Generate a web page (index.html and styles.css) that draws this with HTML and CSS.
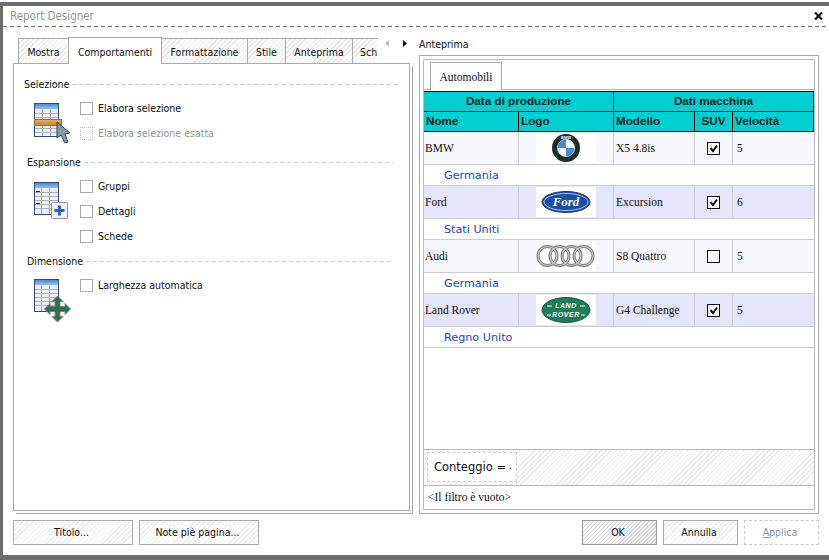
FILE: index.html
```html
<!DOCTYPE html>
<html lang="it">
<head>
<meta charset="utf-8">
<title>Report Designer</title>
<link rel="stylesheet" href="styles.css">
</head>
<body>
<div class="window">
  <header class="titlebar">
    <span class="title">Report Designer</span>
    <svg class="close" width="9" height="8" viewBox="0 0 9 8"><path d="M1 0.5 L8 7.5 M8 0.5 L1 7.5" stroke="#111" stroke-width="2.2"/></svg>
  </header>
  <div class="dashline"></div>
  <div class="content">
    <section class="left">
      <div class="tabbar">
        <div class="tabs">
          <div class="tab t1">Mostra</div>
          <div class="tab active">Comportamenti</div>
          <div class="tab t3">Formattazione</div>
          <div class="tab t4">Stile</div>
          <div class="tab t5">Anteprima</div>
          <div class="tab cut">Sch</div>
        </div>
        <div class="arrows">
          <svg width="5" height="7" viewBox="0 0 5 7"><path d="M4 0 L0 3.5 L4 7Z" fill="#bbb"/></svg>
          <svg width="5" height="7" viewBox="0 0 5 7"><path d="M1 0 L5 3.5 L1 7Z" fill="#111"/></svg>
        </div>
      </div>
      <div class="panel">
        <div class="heading"><span>Selezione</span></div>
        <div class="group g-sel">
          <svg class="gicon" width="40" height="44" viewBox="0 0 40 44">
            <defs>
              <linearGradient id="hd" x1="0" y1="0" x2="0" y2="1"><stop offset="0" stop-color="#4f86d8"/><stop offset="1" stop-color="#9cc0ee"/></linearGradient>
              <linearGradient id="or" x1="0" y1="0" x2="0" y2="1"><stop offset="0" stop-color="#eeb063"/><stop offset="1" stop-color="#cf7f2a"/></linearGradient>
            </defs>
            <rect x="2.500" y="1.500" width="24" height="33" fill="#eef1f3" stroke="#2f4a86"/>
            <rect x="3" y="2" width="23" height="5" fill="url(#hd)"/>
            <path d="M3 11.500H26M3 15.500H26M3 26.500H26M3 30.500H26M10.500 7V34M18.500 7V34" stroke="#a9b0b8" fill="none"/>
            <rect x="2.500" y="17.500" width="27" height="6" fill="url(#or)" stroke="#a86a20"/>
            <path d="M25 20 V36 L29 33 L33 41 L36 40 L33 32 L38 31Z" fill="#8c979c" stroke="#2e3f60"/>
          </svg>
          <div class="checks">
            <label class="check"><span class="box"></span>Elabora selezione</label>
            <label class="check off"><span class="box"></span>Elabora selezione esatta</label>
          </div>
        </div>
        <div class="heading inset"><span>Espansione</span></div>
        <div class="group g-esp">
          <svg class="gicon" width="40" height="44" viewBox="0 0 40 44">
            <rect x="2.500" y="1.500" width="24" height="32" fill="#eef1f3" stroke="#2f4a86"/>
            <rect x="3" y="2" width="23" height="5" fill="url(#hd)"/>
            <path d="M3 11.500H26M3 15.500H26M3 19.500H26M3 23.500H26M3 27.500H26M9.500 7V33M17.500 7V33" stroke="#a9b0b8" fill="none"/>
            <path d="M4 10.500H8M4 22.500H8" stroke="#223" fill="none"/>
            <rect x="19.500" y="21.500" width="16" height="16" rx="1" fill="#f2f4f8" stroke="#8e96a0"/>
            <path d="M27.500 24.500V34.500M22.500 29.500H32.500" stroke="#2a62c4" stroke-width="3" fill="none"/>
          </svg>
          <div class="checks">
            <label class="check"><span class="box"></span>Gruppi</label>
            <label class="check"><span class="box"></span>Dettagli</label>
            <label class="check"><span class="box"></span>Schede</label>
          </div>
        </div>
        <div class="heading inset"><span>Dimensione</span></div>
        <div class="group g-dim">
          <svg class="gicon" width="40" height="44" viewBox="0 0 40 44">
            <rect x="2.500" y="0.500" width="24" height="32" fill="#eef1f3" stroke="#2f4a86"/>
            <rect x="3" y="1" width="23" height="5" fill="url(#hd)"/>
            <path d="M3 10.500H26M3 14.500H26M3 18.500H26M3 22.500H26M3 26.500H26M9.500 6V32M17.500 6V32" stroke="#a9b0b8" fill="none"/>
            <path d="M25.500 17 L31 22.500 H28 V27.500 H33 V24.500 L38.500 30 L33 35.500 V32.500 H28 V37.500 H31 L25.500 43 L20 37.500 H23 V32.500 H18 V35.500 L12.500 30 L18 24.500 V27.500 H23 V22.500 H20Z" fill="#2f6f4e" stroke="#7d8583"/>
          </svg>
          <div class="checks">
            <label class="check"><span class="box"></span>Larghezza automatica</label>
          </div>
        </div>
      </div>
      <div class="btnrow">
        <button class="btn">Titolo...</button>
        <button class="btn">Note piè pagina...</button>
      </div>
    </section>
    <section class="right">
      <div class="prevlabel">Anteprima</div>
      <div class="prevbox">
        <div class="grid">
          <div class="gridtabs"><div class="gtab">Automobili</div></div>
          <div class="thead">
            <div class="th span2">Data di produzione</div>
            <div class="th span3">Dati macchina</div>
            <div class="th lft">Nome</div>
            <div class="th lft">Logo</div>
            <div class="th lft">Modello</div>
            <div class="th">SUV</div>
            <div class="th lft last">Velocità</div>
          </div>
          <div class="row odd">
            <div class="c">BMW</div>
            <div class="c logo"><svg width="60" height="30" viewBox="0 0 60 30"><rect width="60" height="30" fill="#fff"/><circle cx="30" cy="15" r="14" fill="#1e2c28"/><circle cx="30" cy="15" r="8.500" fill="#f4f7fb" stroke="#dfe6e6"/><path d="M30 15 V6.500 A8.500 8.500 0 0 0 21.500 15Z M30 15 V23.500 A8.500 8.500 0 0 0 38.500 15Z" fill="#3f8fd8"/><text x="30" y="5.600" class="bmw">BMW</text></svg></div>
            <div class="c">X5 4.8is</div>
            <div class="c mid"><span class="cb"><svg width="11" height="11" viewBox="0 0 11 11"><path d="M2.500 5 L5 8 L9 2.500" fill="none" stroke="#111" stroke-width="2"/></svg></span></div>
            <div class="c vel">5</div>
          </div>
          <div class="grp">Germania</div>
          <div class="row even">
            <div class="c">Ford</div>
            <div class="c logo"><svg width="60" height="30" viewBox="0 0 60 30"><rect width="60" height="30" fill="#fff"/><ellipse cx="30" cy="15" rx="24" ry="10.500" fill="#1c4da6" stroke="#1d3d7c"/><ellipse cx="30" cy="15" rx="22" ry="8.500" fill="none" stroke="#cfe0f5" stroke-width=".8"/><text x="30" y="19" class="ford">Ford</text></svg></div>
            <div class="c">Excursion</div>
            <div class="c mid"><span class="cb"><svg width="11" height="11" viewBox="0 0 11 11"><path d="M2.500 5 L5 8 L9 2.500" fill="none" stroke="#111" stroke-width="2"/></svg></span></div>
            <div class="c vel">6</div>
          </div>
          <div class="grp">Stati Uniti</div>
          <div class="row odd">
            <div class="c">Audi</div>
            <div class="c logo"><svg width="60" height="30" viewBox="0 0 60 30"><rect width="60" height="30" fill="#fff"/><g fill="none" stroke="#77797b" stroke-width="3"><circle cx="11.500" cy="15" r="9.500"/><circle cx="23.500" cy="15" r="9.500"/><circle cx="35.500" cy="15" r="9.500"/><circle cx="47.500" cy="15" r="9.500"/></g><g fill="none" stroke="#c4c6c8" stroke-width="1.200"><circle cx="11.500" cy="15" r="9.500"/><circle cx="23.500" cy="15" r="9.500"/><circle cx="35.500" cy="15" r="9.500"/><circle cx="47.500" cy="15" r="9.500"/></g></svg></div>
            <div class="c">S8 Quattro</div>
            <div class="c mid"><span class="cb"></span></div>
            <div class="c vel">5</div>
          </div>
          <div class="grp">Germania</div>
          <div class="row even">
            <div class="c">Land Rover</div>
            <div class="c logo"><svg width="60" height="30" viewBox="0 0 60 30"><rect width="60" height="30" fill="#fff"/><ellipse cx="30" cy="15" rx="24" ry="12.500" fill="#1e7d57" stroke="#145a3e"/><text x="30" y="13" class="lr">LAND</text><text x="30" y="22" class="lr">ROVER</text><path d="M11 11H16M11 20H15M44 11H49M45 20H49" stroke="#fff" fill="none"/></svg></div>
            <div class="c">G4 Challenge</div>
            <div class="c mid"><span class="cb"><svg width="11" height="11" viewBox="0 0 11 11"><path d="M2.500 5 L5 8 L9 2.500" fill="none" stroke="#111" stroke-width="2"/></svg></span></div>
            <div class="c vel">5</div>
          </div>
          <div class="grp">Regno Unito</div>
          <div class="spacer"></div>
          <div class="summary"><div class="count"><span class="counttext">Conteggio = 4</span></div></div>
          <div class="filter">&lt;Il filtro è vuoto&gt;</div>
        </div>
      </div>
      <div class="btnrow end">
        <button class="btn ok">OK</button>
        <button class="btn">Annulla</button>
        <button class="btn dis"><u>A</u>pplica</button>
      </div>
    </section>
  </div>
</div>
</body>
</html>
```

FILE: styles.css
```css
* { box-sizing: border-box; }
html, body { margin: 0; padding: 0; background: #fff; }
body {
  width: 829px;
  height: 560px;
  overflow: hidden;
  padding-top: 2px;
  font: 10.500px "DejaVu Sans Condensed", "Liberation Sans", sans-serif;
  color: #111;
}
.window {
  height: 558px;
  border-top: 4px solid #6d6d6d;
  border-left: 3px solid #6d6d6d;
  border-bottom: 5px solid #6d6d6d;
  display: flex;
  flex-direction: column;
}
.titlebar {
  height: 20px;
  padding: 0 6px 0 7px;
  display: flex;
  align-items: center;
  justify-content: space-between;
}
.title { color: #8a9a94; font-size: 11.500px; }
.dashline {
  height: 1px;
  background: repeating-linear-gradient(90deg, #777 0 4px, transparent 4px 7px);
}
.content { flex: 1; display: flex; padding-left: 10px; }
.left { width: 397px; margin-right: 9px; display: flex; flex-direction: column; }
.right { width: 400px; display: flex; flex-direction: column; }

/* tabs */
.tabbar { height: 26px; margin-top: 10px; padding-left: 5px; display: flex; }
.tabs { width: 360px; height: 27px; display: flex; align-items: flex-end; overflow: hidden; position: relative; z-index: 1; }
.tab {
  height: 25px;
  flex: none;
  margin-bottom: 1px;
  padding-top: 1px;
  text-align: center;
  line-height: 24px;
  border: 1px solid #aaa;
  border-bottom: 0;
  margin-right: -1px;
  background: repeating-linear-gradient(135deg, #fff 0 2.600px, #e6e6e6 2.600px 3.600px);
}
.t1 { width: 51px; }
.t3 { width: 87px; }
.t4 { width: 39px; }
.t5 { width: 68px; }
.tab.active { width: 94px; height: 27px; margin-bottom: 0; padding-top: 1px; background: #fff; position: relative; z-index: 1; line-height: 26px; }
.tab.cut { width: 60px; text-align: left; padding-left: 7px; }
.arrows { display: flex; gap: 12px; align-items: center; margin-left: 7px; height: 15px; margin-top: -1px; }

/* left panel */
.panel {
  height: 448px;
  border: 1px solid #aaa;
  background: #fff;
  padding: 14px 11px 0 10px;
  box-shadow: 2px 2px 0 #fff, 3px 3px 0 #aaa;
}
.heading { height: 13px; line-height: 13px; display: flex; align-items: center; gap: 3px; }
.heading::after {
  content: "";
  flex: 1;
  height: 1px;
  background: repeating-linear-gradient(90deg, #ccc 0 4px, transparent 4px 7px);
}
.heading.inset { margin: 0 5px 0 3px; }
.group { display: flex; padding-left: 8px; }
.gicon { flex: none; display: block; margin-right: 8px; }
.g-sel { margin-top: 11px; margin-bottom: 10px; }
.g-esp { margin-top: 11px; margin-bottom: 12px; }
.g-esp .gicon { margin-top: 1px; margin-bottom: -1px; }
.g-dim { margin-top: 11px; }
.checks { display: flex; flex-direction: column; gap: 12px; }
.check { height: 13px; line-height: 13px; display: flex; gap: 5px; }
.box { width: 13px; height: 13px; border: 1px solid #aaa; background: #fff; flex: none; }
.check.off { color: #8a9a94; }
.check.off .box { border: 1px dotted #bbb; }

/* buttons */
.btnrow { display: flex; gap: 6px; margin-top: 6px; height: 25px; }
.left .btnrow { margin-top: 9px; }
.btnrow.end { justify-content: flex-end; }
.btn {
  width: 120px;
  height: 25px;
  padding: 0 3px 2px 0;
  border: 1px solid #aaa;
  font: inherit;
  color: #111;
  background: repeating-linear-gradient(135deg, #fff 0 2.600px, #ececec 2.600px 3.600px);
}
.right .btn { width: 75px; }
.btn.ok { border-color: #999; background: repeating-linear-gradient(135deg, #f4f4f4 0 1.800px, #dcdcdc 1.800px 2.800px); }
.btn.dis { border: 1px dashed #ccc; background: #fff; color: #8a9a94; }

/* preview */
.prevlabel { height: 28px; padding-top: 11px; line-height: 13px; }
.prevbox { height: 459px; border: 1px solid #aaa; padding: 3px; display: flex; }
.grid { flex: 1; border: 1px solid #bbb; display: flex; flex-direction: column; min-width: 0; font-size: 11.500px; }
.gridtabs { height: 30px; padding: 2px 0 0 6px; border-bottom: 1px solid #bbb; flex: none; }
.gtab {
  width: 72px;
  height: 28px;
  border: 1px solid #aaa;
  border-bottom: 0;
  background: #fff;
  text-align: center;
  line-height: 28px;
  font-family: "Liberation Serif", serif;
  position: relative;
}
.thead {
  margin-top: 1px;
  display: grid;
  grid-template-columns: 95px 95px 81px 38px 81px;
  grid-auto-rows: 20px;
  background: #00ced1;
  border-top: 1px solid #000;
  font: bold 11.700px "Liberation Sans", sans-serif;
  color: #0a1a1a;
  flex: none;
}
.th { border-right: 1px solid #000; border-bottom: 1px solid #000; text-align: center; line-height: 18px; }
.span2 { grid-column: span 2; }
.span3 { grid-column: span 3; }
.th.lft { text-align: left; padding-left: 2px; }
.row {
  display: grid;
  grid-template-columns: 95px 95px 81px 38px 81px;
  height: 33px;
  flex: none;
  border-bottom: 1px solid #ccc;
  font-family: "Liberation Serif", serif;
  color: #111;
}
.odd { background: #f7f8fe; }
.even { background: #e4e5f8; }
.c { border-right: 1px solid #ccc; padding-left: 1px; display: flex; align-items: center; line-height: 12px; }
.c:nth-child(3) { padding-left: 2px; }
.c.vel { padding-left: 4px; border-right: 0; }
.c.mid, .c.logo { justify-content: center; padding: 0; }
.c.logo { padding-right: 1px; }
.logo svg { display: block; }
.cb { width: 13px; height: 13px; border: 1px solid #111; background: #fff; display: block; margin-left: -1px; }
.cb svg { display: block; }
.grp {
  height: 21px;
  flex: none;
  padding: 1px 0 0 20px;
  border-bottom: 1px solid #ccc;
  font: 11.200px/20px "DejaVu Sans", sans-serif;
  color: #1a48c4;
}
.spacer { flex: 1; }
.summary {
  height: 37px;
  flex: none;
  padding: 2px 3px;
  border-top: 1px solid #bbb;
  border-bottom: 1px solid #bbb;
  background: repeating-linear-gradient(135deg, #fff 0 2.600px, #e8e8e8 2.600px 3.600px);
}
.count {
  width: 90px;
  height: 30px;
  padding-left: 6px;
  border: 1px dashed #ccc;
  background: #fff;
  font: 11.500px/28px "DejaVu Sans", sans-serif;
}
.counttext { display: block; width: 77px; overflow: hidden; white-space: nowrap; }
.filter { height: 23px; flex: none; padding-left: 4px; line-height: 22px; font-family: "Liberation Serif", serif; }

/* logo text */
.bmw { font: bold 4px "Liberation Sans", sans-serif; fill: #fff; text-anchor: middle; }
.ford { font: italic bold 13px "Liberation Serif", serif; fill: #fff; text-anchor: middle; }
.lr { font: italic bold 7px "Liberation Sans", sans-serif; fill: #fff; text-anchor: middle; letter-spacing: .5px; }
```
